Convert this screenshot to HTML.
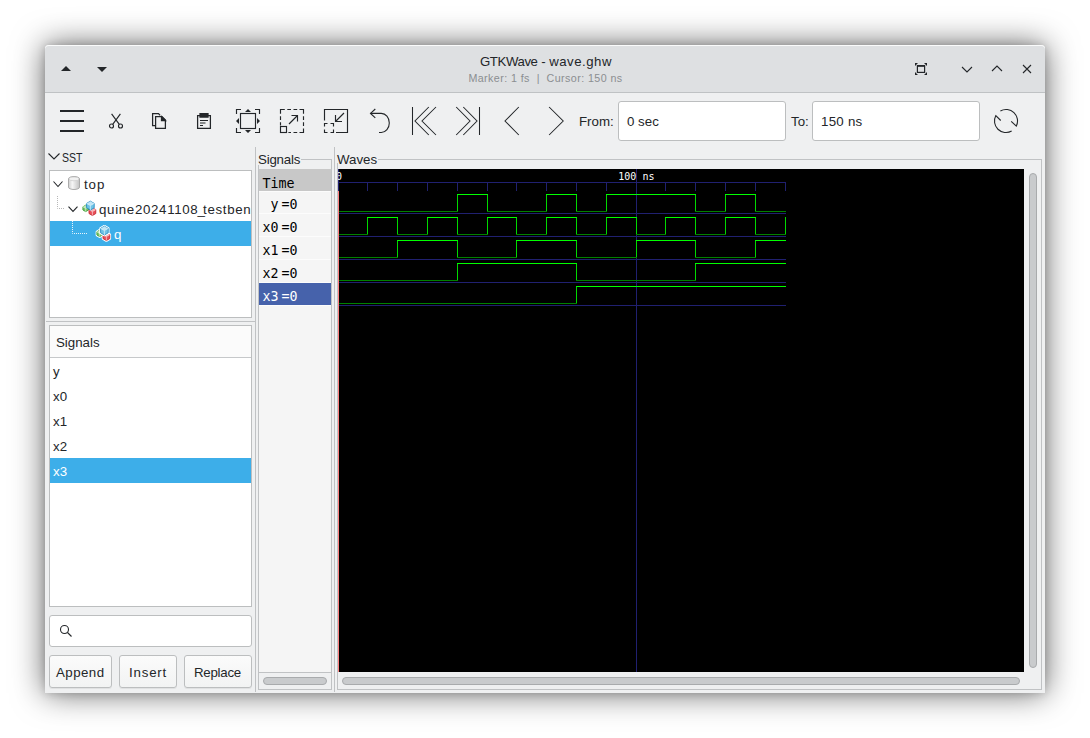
<!DOCTYPE html>
<html lang="en">
<head>
<meta charset="utf-8">
<title>GTKWave - wave.ghw</title>
<style>
*{box-sizing:border-box;margin:0;padding:0}
html,body{width:1090px;height:738px;overflow:hidden;background:#fff}
body{position:relative;font-family:"Liberation Sans","DejaVu Sans",sans-serif;font-size:13px;color:#232629}
.abs{position:absolute}
#win{position:absolute;left:45px;top:45px;width:1000px;height:648px;background:#eff0f1;border-radius:4px 4px 0 0;
 box-shadow:0 0 32px rgba(0,0,0,.62),0 0 8px rgba(0,0,0,.16)}
#tb{position:absolute;left:0;top:0;width:1000px;height:48px;background:#dee0e2;border-radius:4px 4px 0 0;border-bottom:1px solid #bfc2c4;box-shadow:inset 0 1px 0 rgba(255,255,255,.85)}
.t{position:absolute;white-space:nowrap;line-height:1}
svg{position:absolute;overflow:visible}
.box{position:absolute;background:#fff;border:1px solid #bcbebf}
.sel{position:absolute;background:#3daee9}
.btn{position:absolute;border:1px solid #bcbebf;border-radius:3px;background:linear-gradient(#fbfbfb,#f2f3f3);box-shadow:0 1px 0 rgba(0,0,0,.06)}
.entry{position:absolute;border:1px solid #bcbebf;border-radius:3px;background:#fff}
.mono{font-family:"DejaVu Sans Mono","Liberation Mono",monospace;color:#000}
.ln{position:absolute;background:#c0c2c4}
</style>
</head>
<body>
<div id="win">
 <div id="tb"></div>
</div>

<!-- title text -->
<div class="t" id="title" style="left:480px;top:55px;font-size:13.2px;width:131px;text-align:center"><span style="letter-spacing:-.4px">GTKWave</span> - <span style="letter-spacing:.5px">wave.ghw</span></div>
<div class="t" id="sub" style="left:468px;top:73px;font-size:10.7px;letter-spacing:.42px;color:#8b8e91;width:155px;text-align:center">Marker: 1 fs &nbsp;|&nbsp; Cursor: 150 ns</div>


<!-- titlebar icons -->
<svg style="left:61px;top:66px" width="10" height="5" viewBox="0 0 10 5"><path d="M0 5 L5 0 L10 5 Z" fill="#232629"/></svg>
<svg style="left:97px;top:67px" width="10" height="5" viewBox="0 0 10 5"><path d="M0 0 H10 L5 5 Z" fill="#232629"/></svg>
<svg id="ifs" style="left:915px;top:63px" width="12" height="12" viewBox="0 0 12 12"><path d="M0 0 H3 L0 3 Z M12 0 V3 L9 0 Z M12 12 H9 L12 9 Z M0 12 V9 L3 12 Z" fill="#232629"/><rect x="2.400" y="2.600" width="7.200" height="6.800" fill="none" stroke="#232629" stroke-width="1.200"/><rect x="2" y="2" width="8" height="1.800" fill="#232629"/></svg>
<svg style="left:961px;top:66px" width="12" height="7" viewBox="0 0 12 7" fill="none" stroke="#232629" stroke-width="1.100"><path d="M1 1 L6 6 L11 1"/></svg>
<svg style="left:991px;top:65px" width="12" height="7" viewBox="0 0 12 7" fill="none" stroke="#232629" stroke-width="1.100"><path d="M1 6 L6 1 L11 6"/></svg>
<svg style="left:1022px;top:64px" width="10" height="10" viewBox="0 0 10 10" fill="none" stroke="#232629" stroke-width="1.100"><path d="M1 1 L9 9 M9 1 L1 9"/></svg>

<!-- toolbar -->
<svg id="ihb" style="left:60px;top:109px" width="24" height="24" viewBox="0 0 24 24" shape-rendering="crispEdges" fill="#232629"><rect x="0" y="1" width="24" height="2"/><rect x="0" y="11" width="24" height="2"/><rect x="0" y="21" width="24" height="2"/></svg>
<svg id="icut" style="left:108px;top:113px" width="16" height="16" viewBox="0 0 16 16" fill="none" stroke="#232629" stroke-width="1.150"><path d="M3.600 0.800 L11.300 11.400 M12.400 0.800 L4.700 11.400"/><circle cx="3.500" cy="13" r="2"/><circle cx="12.500" cy="13" r="2"/></svg>
<svg id="icopy" style="left:152px;top:113px" width="16" height="16" viewBox="0 0 16 16" fill="none" stroke="#232629" stroke-width="1.250"><path d="M3.500 12.600 H0.600 V0.600 H6.500 L8 2.200"/><path d="M3.600 3.600 H10 L13.400 7 V15.400 H3.600 Z"/><path d="M9.500 3.500 V7.500 H13.500 Z" fill="#232629"/></svg>
<svg id="ipaste" style="left:196px;top:113px" width="16" height="16" viewBox="0 0 16 16" fill="none" stroke="#232629" stroke-width="1.250"><path d="M1.600 2.600 H14.400 V15.400 H1.600 Z"/><path d="M4 0.500 H12 V4 H4 Z" fill="#232629"/><path d="M4 7.500 H12 M4 10 H9.500 M4 12.500 H7" stroke-width="1.100"/></svg>
<svg id="ifit" style="left:236px;top:109px" width="24" height="24" viewBox="0 0 24 24" fill="none" stroke="#232629" stroke-width="1.150"><rect x="4.500" y="4.500" width="15" height="15"/><path d="M0.500 5 V0.500 H5 M19 0.500 H23.500 V5 M23.500 19 V23.500 H19 M5 23.500 H0.500 V19"/><path d="M9 3 L12 0 L15 3 Z M9 21 L12 24 L15 21 Z M3 9 L0 12 L3 15 Z M21 9 L24 12 L21 15 Z" fill="#232629" stroke="none"/></svg>
<svg id="izin" style="left:280px;top:109px" width="24" height="24" viewBox="0 0 24 24" fill="none" stroke="#232629" stroke-width="1.150"><path d="M0.500 4.700 V0.500 H4.800 M7.300 0.500 H11 M13.500 0.500 H17.200 M19.500 0.500 H23.500 V4.700 M23.500 7.200 V10.900 M23.500 13.300 V16.900 M23.500 19.400 V23.500 H19.500 M17.200 23.500 H13.500 M11 23.500 H8.400 M0.500 7.200 V10.900 M0.500 13.300 V16.500"/><rect x="0.500" y="17.500" width="6" height="6"/><path d="M9 15 L17.500 6.500 M11.500 6.500 H17.500 V12.500"/></svg>
<svg id="izout" style="left:324px;top:109px" width="24" height="24" viewBox="0 0 24 24" fill="none" stroke="#232629" stroke-width="1.150"><path d="M0.500 11.500 V0.500 H23.500 V23.500 H12"/><path d="M0.500 17.500 V14.500 H3.500 M6.500 14.500 H9.500 V17.500 M9.500 20.500 V23.500 H6.500 M3.500 23.500 H0.500 V20.500"/><path d="M20 4 L11.500 12.500 M11.500 6 V12.500 H18"/></svg>
<svg id="iundo" style="left:368px;top:109px" width="24" height="24" viewBox="0 0 24 24" fill="none" stroke="#232629" stroke-width="1.100"><path d="M7.300 0 L2.500 4.400 L7.300 8.800"/><path d="M2.500 4.400 H13.300 A8 9.550 0 0 1 13.300 23.500 H11"/></svg>
<svg id="ifirst" style="left:410px;top:107px" width="28" height="28" viewBox="0 0 28 28" fill="none" stroke="#232629" stroke-width="1.050"><path d="M2.500 0 V28 M18.800 0 L5 14 L18.800 28 M26 0 L12 14 L26 28"/></svg>
<svg id="ilast" style="left:454px;top:107px" width="28" height="28" viewBox="0 0 28 28" fill="none" stroke="#232629" stroke-width="1.050"><path d="M25.500 0 V28 M9.300 0 L23 14 L9.300 28 M2.200 0 L16 14 L2.200 28"/></svg>
<svg id="iprev" style="left:498px;top:107px" width="28" height="28" viewBox="0 0 28 28" fill="none" stroke="#232629" stroke-width="1.050"><path d="M20.800 0 L7 14 L20.800 28"/></svg>
<svg id="inext" style="left:542px;top:107px" width="28" height="28" viewBox="0 0 28 28" fill="none" stroke="#232629" stroke-width="1.050"><path d="M7.100 0 L21.200 14 L7.100 28"/></svg>
<div class="t" id="from" style="left:579px;top:115px;font-size:13.3px">From:</div>
<div class="entry" style="left:618px;top:101px;width:168px;height:40px"></div>
<div class="t" id="fromv" style="left:627px;top:115px;font-size:13.3px">0 sec</div>
<div class="t" id="to" style="left:791px;top:115px;font-size:13.3px">To:</div>
<div class="entry" style="left:812px;top:101px;width:168px;height:40px"></div>
<div class="t" id="tov" style="left:821px;top:115px;font-size:13.3px;letter-spacing:.25px">150 ns</div>
<svg id="ireload" style="left:994px;top:109px" width="24" height="24" viewBox="0 0 24 24" fill="none" stroke="#232629" stroke-width="1.100"><path d="M6.400 1.950 A11.500 11.500 0 0 1 22.350 17.050 L17.200 12.300"/><path d="M17.650 22.050 A11.500 11.500 0 0 1 1.850 6.600 L6.700 11.500"/></svg>


<!-- paned separators -->
<div class="ln" style="left:255px;top:147px;width:1px;height:545px"></div>
<div class="ln" style="left:334px;top:147px;width:1px;height:545px"></div>
<div class="ln" style="left:46px;top:321px;width:209px;height:1px"></div>

<!-- SST -->
<svg style="left:48px;top:153px" width="12" height="7" viewBox="0 0 12 7" fill="none" stroke="#232629" stroke-width="1.1"><path d="M0.5 0.5 L6 6 L11.5 0.5"/></svg>
<div class="t" id="sst" style="left:62px;top:151px;font-size:13.3px;transform:scaleX(.79);transform-origin:0 0">SST</div>
<div class="box" style="left:49px;top:170px;width:203px;height:148px"></div>
<div class="sel" style="left:50px;top:221px;width:201px;height:25px"></div>
<svg style="left:53px;top:181px" width="10" height="7" viewBox="0 0 10 7" fill="none" stroke="#232629" stroke-width="1.1"><path d="M0.5 0.5 L5 5.5 L9.5 0.5"/></svg>
<svg id="icyl" style="left:68px;top:176px" width="12" height="14" viewBox="0 0 12 14"><defs><linearGradient id="cg" x1="0" x2="1"><stop offset="0" stop-color="#cfcfcf"/><stop offset=".35" stop-color="#f6f6f6"/><stop offset="1" stop-color="#c2c2c2"/></linearGradient></defs><path d="M0.500 2.800 V11.200 A5.500 2.300 0 0 0 11.500 11.200 V2.800 A5.500 2.300 0 0 0 0.500 2.800 Z" fill="url(#cg)" stroke="#a4a4a4" stroke-width=".9"/><ellipse cx="6" cy="2.900" rx="5" ry="1.900" fill="#f2f2f2" stroke="#c4c4c4" stroke-width=".6"/></svg>
<div class="t" id="top" style="left:84px;top:178px;font-size:13.3px;letter-spacing:.9px">top</div>
<svg style="left:57px;top:196px" width="12" height="14" viewBox="0 0 12 14" fill="none" stroke="#b8b8b8" stroke-width="1" stroke-dasharray="1 1"><path d="M0.5 0 V12.5 H8"/></svg>
<svg style="left:68px;top:206px" width="10" height="7" viewBox="0 0 10 7" fill="none" stroke="#232629" stroke-width="1.1"><path d="M0.5 0.700 L5 5.500 L9.500 0.700"/></svg>
<svg id="icube1" style="left:81.5px;top:200.5px" width="16" height="15" viewBox="0 0 16 15"><polygon points="3.70,4.20 6.47,5.80 6.47,9.00 3.70,10.60 0.93,9.00 0.93,5.80" fill="#78c46c" stroke="#3f9e35" stroke-width="0.9" stroke-linejoin="round"/><polygon points="3.70,4.20 6.47,5.80 3.70,7.40 0.93,5.80" fill="#d9f2d2" opacity=".75"/><path d="M3.70 7.40 L3.70 10.60 M3.70 7.40 L6.47 5.80 M3.70 7.40 L0.93 5.80" stroke="#d9f2d2" stroke-width=".7" fill="none"/><polygon points="10.40,6.70 13.78,8.65 13.78,12.55 10.40,14.50 7.02,12.55 7.02,8.65" fill="#e8525a" stroke="#c7262f" stroke-width="0.9" stroke-linejoin="round"/><polygon points="10.40,6.70 13.78,8.65 10.40,10.60 7.02,8.65" fill="#fbd3d5" opacity=".75"/><path d="M10.40 10.60 L10.40 14.50 M10.40 10.60 L13.78 8.65 M10.40 10.60 L7.02 8.65" stroke="#fbd3d5" stroke-width=".7" fill="none"/><polygon points="8.40,0.20 12.21,2.40 12.21,6.80 8.40,9.00 4.59,6.80 4.59,2.40" fill="#6fc3e6" stroke="#2a8fc4" stroke-width="0.9" stroke-linejoin="round"/><polygon points="8.40,0.20 12.21,2.40 8.40,4.60 4.59,2.40" fill="#dcf2fb" opacity=".75"/><path d="M8.40 4.60 L8.40 9.00 M8.40 4.60 L12.21 2.40 M8.40 4.60 L4.59 2.40" stroke="#dcf2fb" stroke-width=".7" fill="none"/></svg>
<div class="t" id="quine" style="left:99px;top:203px;font-size:13.3px;letter-spacing:.67px;width:152px;height:18px;overflow:hidden">quine20241108<span style="margin-left:-.9px;letter-spacing:-1.9px">_</span>testbench</div>
<svg style="left:72px;top:221px" width="16" height="14" viewBox="0 0 16 14" fill="none" stroke="#e8f4fb" stroke-width="1" stroke-dasharray="1 1"><path d="M0.500 0 V12.5 H16"/></svg>
<svg id="icube2" style="left:96px;top:225.5px" width="16" height="15" viewBox="0 0 16 15"><polygon points="3.70,4.20 6.47,5.80 6.47,9.00 3.70,10.60 0.93,9.00 0.93,5.80" fill="#ffffff" stroke="#ffffff" stroke-width="2.6" stroke-linejoin="round"/><polygon points="3.70,4.20 6.47,5.80 6.47,9.00 3.70,10.60 0.93,9.00 0.93,5.80" fill="#78c46c" stroke="#3f9e35" stroke-width="0.9" stroke-linejoin="round"/><polygon points="3.70,4.20 6.47,5.80 3.70,7.40 0.93,5.80" fill="#d9f2d2" opacity=".75"/><path d="M3.70 7.40 L3.70 10.60 M3.70 7.40 L6.47 5.80 M3.70 7.40 L0.93 5.80" stroke="#d9f2d2" stroke-width=".7" fill="none"/><polygon points="10.40,6.70 13.78,8.65 13.78,12.55 10.40,14.50 7.02,12.55 7.02,8.65" fill="#ffffff" stroke="#ffffff" stroke-width="2.6" stroke-linejoin="round"/><polygon points="10.40,6.70 13.78,8.65 13.78,12.55 10.40,14.50 7.02,12.55 7.02,8.65" fill="#e8525a" stroke="#c7262f" stroke-width="0.9" stroke-linejoin="round"/><polygon points="10.40,6.70 13.78,8.65 10.40,10.60 7.02,8.65" fill="#fbd3d5" opacity=".75"/><path d="M10.40 10.60 L10.40 14.50 M10.40 10.60 L13.78 8.65 M10.40 10.60 L7.02 8.65" stroke="#fbd3d5" stroke-width=".7" fill="none"/><polygon points="8.40,0.20 12.21,2.40 12.21,6.80 8.40,9.00 4.59,6.80 4.59,2.40" fill="#ffffff" stroke="#ffffff" stroke-width="2.6" stroke-linejoin="round"/><polygon points="8.40,0.20 12.21,2.40 12.21,6.80 8.40,9.00 4.59,6.80 4.59,2.40" fill="#6fc3e6" stroke="#2a8fc4" stroke-width="0.9" stroke-linejoin="round"/><polygon points="8.40,0.20 12.21,2.40 8.40,4.60 4.59,2.40" fill="#dcf2fb" opacity=".75"/><path d="M8.40 4.60 L8.40 9.00 M8.40 4.60 L12.21 2.40 M8.40 4.60 L4.59 2.40" stroke="#dcf2fb" stroke-width=".7" fill="none"/></svg>
<div class="t" id="q" style="left:114px;top:228px;font-size:13.3px;color:#fff">q</div>

<!-- signal list -->
<div class="box" style="left:49px;top:325px;width:203px;height:282px"></div>
<div class="abs" style="left:50px;top:326px;width:201px;height:32px;background:#fbfbfb;border-bottom:1px solid #c6c8ca"></div>
<div class="t" id="sigh" style="left:56px;top:336px;font-size:13.3px">Signals</div>
<div class="sel" style="left:50px;top:458px;width:201px;height:25px"></div>
<div class="t" id="ly" style="left:53px;top:365px;font-size:13.3px">y</div>
<div class="t" style="left:53px;top:390px;font-size:13.3px">x0</div>
<div class="t" style="left:53px;top:415px;font-size:13.3px">x1</div>
<div class="t" style="left:53px;top:440px;font-size:13.3px">x2</div>
<div class="t" id="lx3" style="left:53px;top:465px;font-size:13.3px;color:#fff">x3</div>

<!-- search + buttons -->
<div class="entry" style="left:49px;top:615px;width:203px;height:32px"></div>
<svg id="isearch" style="left:59px;top:624px" width="14" height="14" viewBox="0 0 14 14" fill="none" stroke="#232629" stroke-width="1.1"><circle cx="5.500" cy="5.500" r="4"/><path d="M8.5 8.5 L12.5 12.5"/></svg>
<div class="btn" style="left:49px;top:655px;width:63px;height:33px"></div>
<div class="btn" style="left:119px;top:655px;width:58px;height:33px"></div>
<div class="btn" style="left:184px;top:655px;width:68px;height:33px"></div>
<div class="t" id="bapp" style="left:56px;top:666px;font-size:13.3px;letter-spacing:.45px">Append</div>
<div class="t" id="bins" style="left:129px;top:666px;font-size:13.3px;letter-spacing:.8px">Insert</div>
<div class="t" id="brep" style="left:194px;top:666px;font-size:13.3px;letter-spacing:-.27px">Replace</div>

<!-- Signals frame -->
<div class="abs" style="left:258px;top:159px;width:74px;height:531px;border:1px solid #c0c2c4"></div>
<div class="t" id="fsig" style="left:258px;top:153px;font-size:13.3px;letter-spacing:-.2px;background:#eff0f1;padding-right:1px;height:12px">Signals</div>
<div class="abs" style="left:259px;top:169px;width:72px;height:503px;background:#f5f5f5"></div>
<div class="abs" style="left:259px;top:169px;width:72px;height:22px;background:#c8c8c8"></div>
<div class="abs" style="left:259px;top:283px;width:72px;height:22px;background:#4662ab"></div>
<div class="ln" style="left:259px;top:672px;width:72px;height:1px"></div>
<div class="abs" style="left:263px;top:677px;width:64px;height:8px;border-radius:4px;background:#c9cbcd;border:1px solid #a9abad"></div>
<div class="abs" style="left:259px;top:191px;width:72px;height:1px;background:#fcfcfc"></div><div class="abs" style="left:259px;top:213px;width:72px;height:1px;background:#fcfcfc"></div><div class="abs" style="left:259px;top:236px;width:72px;height:1px;background:#fcfcfc"></div><div class="abs" style="left:259px;top:259px;width:72px;height:1px;background:#fcfcfc"></div><div class="abs" style="left:259px;top:282px;width:72px;height:1px;background:#fcfcfc"></div><div class="abs" style="left:259px;top:305px;width:72px;height:1px;background:#fcfcfc"></div>
<div class="t mono" id="mtime" style="left:262.5px;top:176.5px;font-size:13.3px">Time</div>
<div class="t mono" style="left:259px;width:19.6px;text-align:right;top:197.5px;font-size:13.3px">y</div>
<div class="t mono" style="left:281.6px;top:197.5px;font-size:13.3px">=0</div>
<div class="t mono" style="left:259px;width:19.6px;text-align:right;top:220.5px;font-size:13.3px">x0</div>
<div class="t mono" style="left:281.6px;top:220.5px;font-size:13.3px">=0</div>
<div class="t mono" style="left:259px;width:19.6px;text-align:right;top:243.5px;font-size:13.3px">x1</div>
<div class="t mono" style="left:281.6px;top:243.5px;font-size:13.3px">=0</div>
<div class="t mono" style="left:259px;width:19.6px;text-align:right;top:266.5px;font-size:13.3px">x2</div>
<div class="t mono" style="left:281.6px;top:266.5px;font-size:13.3px">=0</div>
<div class="t mono" style="left:259px;width:19.6px;text-align:right;top:289.5px;font-size:13.3px;color:#fff">x3</div>
<div class="t mono" style="left:281.6px;top:289.5px;font-size:13.3px;color:#fff">=0</div>

<!-- Waves frame -->
<div class="abs" style="left:337px;top:159px;width:705px;height:531px;border:1px solid #c0c2c4"></div>
<div class="t" id="fwav" style="left:337px;top:153px;font-size:13.3px;background:#eff0f1;padding-right:1px;height:10px">Waves</div>
<svg id="waves" style="left:338px;top:169px;overflow:hidden" width="686" height="503" viewBox="338 169 686 503" shape-rendering="crispEdges">
<rect x="338" y="169" width="686" height="503" fill="#000"/>
<g fill="#202070">
<rect x="338" y="182" width="448" height="1"/>
<rect x="338" y="182" width="1" height="9"/>
<rect x="367" y="182" width="1" height="9"/>
<rect x="397" y="182" width="1" height="9"/>
<rect x="427" y="182" width="1" height="9"/>
<rect x="457" y="182" width="1" height="9"/>
<rect x="487" y="182" width="1" height="9"/>
<rect x="516" y="182" width="1" height="9"/>
<rect x="546" y="182" width="1" height="9"/>
<rect x="576" y="182" width="1" height="9"/>
<rect x="606" y="182" width="1" height="9"/>
<rect x="636" y="182" width="1" height="9"/>
<rect x="665" y="182" width="1" height="9"/>
<rect x="695" y="182" width="1" height="9"/>
<rect x="725" y="182" width="1" height="9"/>
<rect x="755" y="182" width="1" height="9"/>
<rect x="785" y="182" width="1" height="9"/>
<rect x="338" y="213" width="448" height="1"/>
<rect x="338" y="236" width="448" height="1"/>
<rect x="338" y="259" width="448" height="1"/>
<rect x="338" y="282" width="448" height="1"/>
<rect x="338" y="305" width="448" height="1"/>
<rect x="636" y="169" width="1" height="503"/>
<rect x="338" y="169" width="1" height="22"/>
</g>
<rect x="338" y="191" width="1" height="481" fill="#ff8080"/>
<rect x="457" y="194" width="1" height="18" fill="#00d800"/>
<rect x="487" y="194" width="1" height="18" fill="#00d800"/>
<rect x="546" y="194" width="1" height="18" fill="#00d800"/>
<rect x="576" y="194" width="1" height="18" fill="#00d800"/>
<rect x="606" y="194" width="1" height="18" fill="#00d800"/>
<rect x="695" y="194" width="1" height="18" fill="#00d800"/>
<rect x="725" y="194" width="1" height="18" fill="#00d800"/>
<rect x="755" y="194" width="1" height="18" fill="#00d800"/>
<rect x="367" y="217" width="1" height="18" fill="#00d800"/>
<rect x="397" y="217" width="1" height="18" fill="#00d800"/>
<rect x="427" y="217" width="1" height="18" fill="#00d800"/>
<rect x="457" y="217" width="1" height="18" fill="#00d800"/>
<rect x="487" y="217" width="1" height="18" fill="#00d800"/>
<rect x="516" y="217" width="1" height="18" fill="#00d800"/>
<rect x="546" y="217" width="1" height="18" fill="#00d800"/>
<rect x="576" y="217" width="1" height="18" fill="#00d800"/>
<rect x="606" y="217" width="1" height="18" fill="#00d800"/>
<rect x="636" y="217" width="1" height="18" fill="#00d800"/>
<rect x="665" y="217" width="1" height="18" fill="#00d800"/>
<rect x="695" y="217" width="1" height="18" fill="#00d800"/>
<rect x="725" y="217" width="1" height="18" fill="#00d800"/>
<rect x="755" y="217" width="1" height="18" fill="#00d800"/>
<rect x="785" y="217" width="1" height="18" fill="#00d800"/>
<rect x="397" y="240" width="1" height="18" fill="#00d800"/>
<rect x="457" y="240" width="1" height="18" fill="#00d800"/>
<rect x="516" y="240" width="1" height="18" fill="#00d800"/>
<rect x="576" y="240" width="1" height="18" fill="#00d800"/>
<rect x="636" y="240" width="1" height="18" fill="#00d800"/>
<rect x="695" y="240" width="1" height="18" fill="#00d800"/>
<rect x="755" y="240" width="1" height="18" fill="#00d800"/>
<rect x="457" y="263" width="1" height="18" fill="#00d800"/>
<rect x="576" y="263" width="1" height="18" fill="#00d800"/>
<rect x="695" y="263" width="1" height="18" fill="#00d800"/>
<rect x="576" y="286" width="1" height="18" fill="#00d800"/>
<rect x="339" y="211" width="29" height="1" fill="#008000"/>
<rect x="367" y="211" width="31" height="1" fill="#008000"/>
<rect x="397" y="211" width="31" height="1" fill="#008000"/>
<rect x="427" y="211" width="31" height="1" fill="#008000"/>
<rect x="457" y="194" width="31" height="1" fill="#00ff00"/>
<rect x="487" y="211" width="30" height="1" fill="#008000"/>
<rect x="516" y="211" width="31" height="1" fill="#008000"/>
<rect x="546" y="194" width="31" height="1" fill="#00ff00"/>
<rect x="576" y="211" width="31" height="1" fill="#008000"/>
<rect x="606" y="194" width="31" height="1" fill="#00ff00"/>
<rect x="636" y="194" width="30" height="1" fill="#00ff00"/>
<rect x="665" y="194" width="31" height="1" fill="#00ff00"/>
<rect x="695" y="211" width="31" height="1" fill="#008000"/>
<rect x="725" y="194" width="31" height="1" fill="#00ff00"/>
<rect x="755" y="211" width="31" height="1" fill="#008000"/>
<rect x="339" y="234" width="29" height="1" fill="#008000"/>
<rect x="367" y="217" width="31" height="1" fill="#00ff00"/>
<rect x="397" y="234" width="31" height="1" fill="#008000"/>
<rect x="427" y="217" width="31" height="1" fill="#00ff00"/>
<rect x="457" y="234" width="31" height="1" fill="#008000"/>
<rect x="487" y="217" width="30" height="1" fill="#00ff00"/>
<rect x="516" y="234" width="31" height="1" fill="#008000"/>
<rect x="546" y="217" width="31" height="1" fill="#00ff00"/>
<rect x="576" y="234" width="31" height="1" fill="#008000"/>
<rect x="606" y="217" width="31" height="1" fill="#00ff00"/>
<rect x="636" y="234" width="30" height="1" fill="#008000"/>
<rect x="665" y="217" width="31" height="1" fill="#00ff00"/>
<rect x="695" y="234" width="31" height="1" fill="#008000"/>
<rect x="725" y="217" width="31" height="1" fill="#00ff00"/>
<rect x="755" y="234" width="31" height="1" fill="#008000"/>
<rect x="339" y="257" width="29" height="1" fill="#008000"/>
<rect x="367" y="257" width="31" height="1" fill="#008000"/>
<rect x="397" y="240" width="31" height="1" fill="#00ff00"/>
<rect x="427" y="240" width="31" height="1" fill="#00ff00"/>
<rect x="457" y="257" width="31" height="1" fill="#008000"/>
<rect x="487" y="257" width="30" height="1" fill="#008000"/>
<rect x="516" y="240" width="31" height="1" fill="#00ff00"/>
<rect x="546" y="240" width="31" height="1" fill="#00ff00"/>
<rect x="576" y="257" width="31" height="1" fill="#008000"/>
<rect x="606" y="257" width="31" height="1" fill="#008000"/>
<rect x="636" y="240" width="30" height="1" fill="#00ff00"/>
<rect x="665" y="240" width="31" height="1" fill="#00ff00"/>
<rect x="695" y="257" width="31" height="1" fill="#008000"/>
<rect x="725" y="257" width="31" height="1" fill="#008000"/>
<rect x="755" y="240" width="31" height="1" fill="#00ff00"/>
<rect x="339" y="280" width="29" height="1" fill="#008000"/>
<rect x="367" y="280" width="31" height="1" fill="#008000"/>
<rect x="397" y="280" width="31" height="1" fill="#008000"/>
<rect x="427" y="280" width="31" height="1" fill="#008000"/>
<rect x="457" y="263" width="31" height="1" fill="#00ff00"/>
<rect x="487" y="263" width="30" height="1" fill="#00ff00"/>
<rect x="516" y="263" width="31" height="1" fill="#00ff00"/>
<rect x="546" y="263" width="31" height="1" fill="#00ff00"/>
<rect x="576" y="280" width="31" height="1" fill="#008000"/>
<rect x="606" y="280" width="31" height="1" fill="#008000"/>
<rect x="636" y="280" width="30" height="1" fill="#008000"/>
<rect x="665" y="280" width="31" height="1" fill="#008000"/>
<rect x="695" y="263" width="31" height="1" fill="#00ff00"/>
<rect x="725" y="263" width="31" height="1" fill="#00ff00"/>
<rect x="755" y="263" width="31" height="1" fill="#00ff00"/>
<rect x="339" y="303" width="29" height="1" fill="#008000"/>
<rect x="367" y="303" width="31" height="1" fill="#008000"/>
<rect x="397" y="303" width="31" height="1" fill="#008000"/>
<rect x="427" y="303" width="31" height="1" fill="#008000"/>
<rect x="457" y="303" width="31" height="1" fill="#008000"/>
<rect x="487" y="303" width="30" height="1" fill="#008000"/>
<rect x="516" y="303" width="31" height="1" fill="#008000"/>
<rect x="546" y="303" width="31" height="1" fill="#008000"/>
<rect x="576" y="286" width="31" height="1" fill="#00ff00"/>
<rect x="606" y="286" width="31" height="1" fill="#00ff00"/>
<rect x="636" y="286" width="30" height="1" fill="#00ff00"/>
<rect x="665" y="286" width="31" height="1" fill="#00ff00"/>
<rect x="695" y="286" width="31" height="1" fill="#00ff00"/>
<rect x="725" y="286" width="31" height="1" fill="#00ff00"/>
<rect x="755" y="286" width="31" height="1" fill="#00ff00"/>
<text x="339" y="180" text-anchor="middle" font-family="DejaVu Sans Mono, Liberation Mono, monospace" font-size="10" fill="#fff">0</text>
<text id="t100" x="636.4" y="180" text-anchor="middle" font-family="DejaVu Sans Mono, Liberation Mono, monospace" font-size="10" fill="#fff">100 ns</text>
</svg>
<div class="abs" style="left:1029px;top:173px;width:8px;height:495px;border-radius:4px;background:#c9cbcd;border:1px solid #a9abad"></div>
<div class="abs" style="left:342px;top:677px;width:678px;height:8px;border-radius:4px;background:#c9cbcd;border:1px solid #a9abad"></div>

</body>
</html>
